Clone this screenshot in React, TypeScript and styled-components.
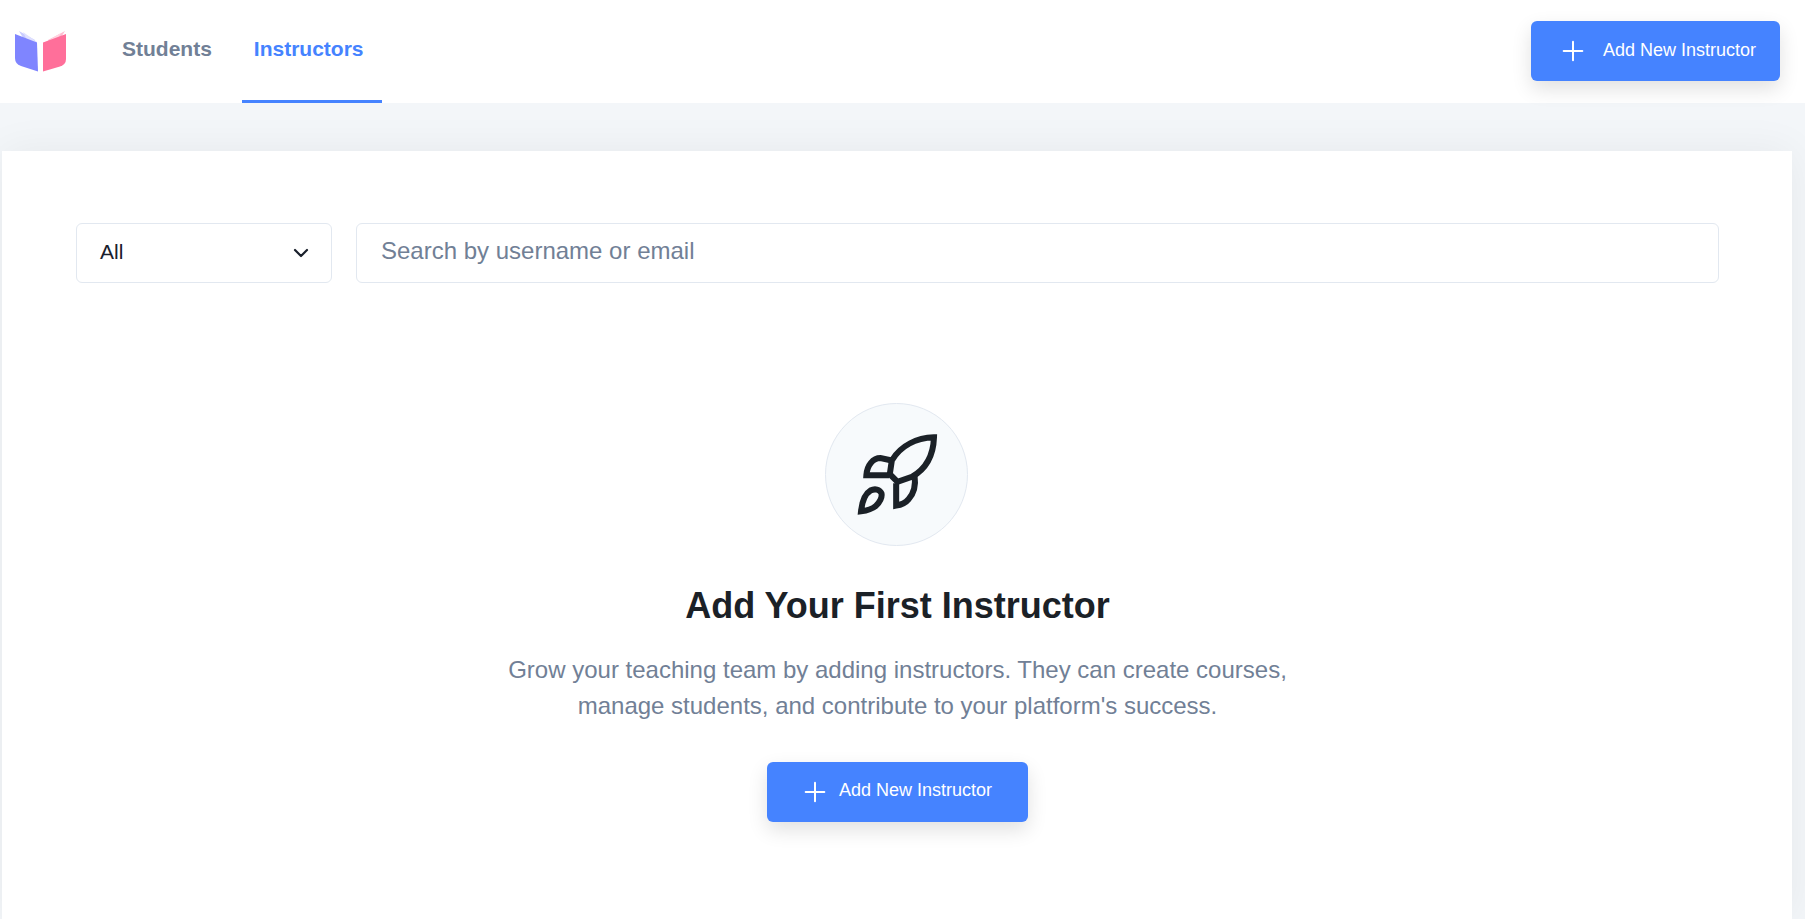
import { Plus, ChevronDown } from "lucide-react";
import styled, { createGlobalStyle } from "styled-components";

const GlobalStyle = createGlobalStyle`
  html, body {
    margin: 0;
    height: 100%;
    overflow: hidden;
    background: #f3f6f9;
    font-family: "Liberation Sans", Arial, sans-serif;
  }
  * {
    box-sizing: border-box;
  }
`;

const Logo = () => (
    <LogoMark viewBox="0 0 54 42" aria-hidden="true">
        <path d="M4 1 L20 10 L21 30 Z" fill="#c9ccff" />
        <path d="M8 2 L22 12 L22 30 Z" fill="#dfe0ff" />
        <path d="M50 1 L33 10 L32 30 Z" fill="#ffbdd1" />
        <path d="M46 3 L31 12 L31 30 Z" fill="#ffd6e2" />
        <path
            d="M0 4 L22 12.5 L23 41.5 L6 36 Q0 34 0 28 Z"
            fill="#7f85ff"
        />
        <path
            d="M51 4 L28 12.5 L28 41.5 L45 36.5 Q51 34.5 51 29 Z"
            fill="#ff6f9a"
        />
    </LogoMark>
);

const RocketIcon = () => (
    <RocketSvg viewBox="136 130 248 248" aria-hidden="true">
        <path d="M372 143 C322 145 274 166 246 212 L240 253 L263 276 L306 261 C347 238 370 200 372 143 Z" />
        <path d="M246 212 L212 205 C190 205 172 226 170 256 L238 256" />
        <path d="M314 258 C318 285 312 310 296 328 C286 340 272 345 259 347 L259 280" />
        <path d="M154 364 C157 335 165 312 182 302 C196 295 210 299 215 310 C218 322 210 338 198 348 C186 358 170 362 154 364 Z" />
    </RocketSvg>
);

const App = () => {
    return (
        <Page>
            <GlobalStyle />
            <Nav>
                <NavLeft>
                    <Logo />
                    <Tabs>
                        <Tab>Students</Tab>
                        <Tab $active>Instructors</Tab>
                    </Tabs>
                </NavLeft>
                <TopButton>
                    <Plus size={32} strokeWidth={1.5} />
                    Add New Instructor
                </TopButton>
            </Nav>
            <Card>
                <Filters>
                    <RoleSelect>
                        All
                        <ChevronDown size={24} strokeWidth={2.2} color="#1a202c" />
                    </RoleSelect>
                    <SearchInput placeholder="Search by username or email" />
                </Filters>
                <Empty>
                    <IconCircle>
                        <RocketIcon />
                    </IconCircle>
                    <Title>Add Your First Instructor</Title>
                    <Description>
                        Grow your teaching team by adding instructors. They can
                        create courses,
                        <br />
                        manage students, and contribute to your platform's
                        success.
                    </Description>
                    <EmptyButton>
                        <Plus size={32} strokeWidth={1.5} />
                        <EmptyLabel>Add New Instructor</EmptyLabel>
                    </EmptyButton>
                </Empty>
            </Card>
        </Page>
    );
};

export default App;

const Page = styled.div`
  height: 919px;
  overflow: hidden;
`;

const Nav = styled.header`
  display: flex;
  align-items: center;
  justify-content: space-between;
  height: 103px;
  padding: 0 25px 2px 15px;
  background: #fff;
`;

const NavLeft = styled.div`
  display: flex;
  align-items: center;
  height: 103px;
  margin-bottom: -2px;
`;

const LogoMark = styled.svg`
  width: 54px;
  height: 42px;
  margin-top: -2px;
`;

const Tabs = styled.nav`
  display: flex;
  height: 100%;
  margin-left: 41px;
  gap: 12px;
`;

const Tab = styled.a<{ $active?: boolean }>`
  display: flex;
  align-items: center;
  padding: 0 18px 2px 12px;
  font-size: 21px;
  font-weight: 700;
  color: ${(p) => (p.$active ? "#4583ff" : "#718096")};
  border-bottom: 3px solid ${(p) => (p.$active ? "#4583ff" : "transparent")};
`;

const PrimaryButton = styled.button`
  display: flex;
  align-items: center;
  height: 60px;
  border: none;
  border-radius: 6px;
  background: #4583ff;
  color: #fff;
  font-family: inherit;
  font-size: 18px;
  box-shadow: 0 8px 20px rgba(0, 0, 0, 0.12);
`;

const TopButton = styled(PrimaryButton)`
  width: 249px;
  padding: 0 0 0 26px;
  gap: 14px;
`;

const Card = styled.main`
  height: 768px;
  margin: 48px 13px 0 2px;
  padding: 72px 73px 0 74px;
  background: #fff;
  box-shadow: 0 0 40px rgba(0, 0, 0, 0.06);
`;

const Filters = styled.div`
  display: flex;
  gap: 24px;
`;

const RoleSelect = styled.div`
  display: flex;
  align-items: center;
  justify-content: space-between;
  width: 256px;
  height: 60px;
  padding: 0 18px 2px 23px;
  background: #fff;
  border: 1px solid #e2e8f0;
  border-radius: 6px;
  font-size: 21px;
  color: #1a202c;
  svg {
    margin-top: 2px;
  }
`;

const SearchInput = styled.input`
  flex: 1;
  height: 60px;
  padding: 0 24px 4px;
  border: 1px solid #e2e8f0;
  border-radius: 6px;
  font-family: inherit;
  font-size: 24px;
  outline: none;
  &::placeholder {
    color: #718096;
    opacity: 1;
  }
`;

const Empty = styled.section`
  display: flex;
  flex-direction: column;
  align-items: center;
  margin-top: 120px;
`;

const IconCircle = styled.div`
  display: flex;
  align-items: center;
  justify-content: center;
  width: 143px;
  height: 143px;
  margin-right: 2px;
  background: #f7fafc;
  border: 1px solid #e2e8f0;
  border-radius: 50%;
`;

const RocketSvg = styled.svg`
  flex-shrink: 0;
  width: 83px;
  height: 83px;
  fill: none;
  stroke: #1b2127;
  stroke-width: 18;
  stroke-linejoin: miter;
  stroke-miterlimit: 6;
  stroke-linecap: butt;
`;

const Title = styled.h2`
  margin: 38px 0 0;
  font-size: 36px;
  line-height: 44px;
  font-weight: 700;
  color: #1b2127;
`;

const Description = styled.p`
  margin: 24px 0 0;
  font-size: 24px;
  line-height: 36px;
  text-align: center;
  color: #718096;
`;

const EmptyButton = styled(PrimaryButton)`
  width: 261px;
  margin-top: 38px;
  padding: 0 0 0 32px;
  gap: 8px;
`;

const EmptyLabel = styled.span`
  margin-top: -3px;
`;
